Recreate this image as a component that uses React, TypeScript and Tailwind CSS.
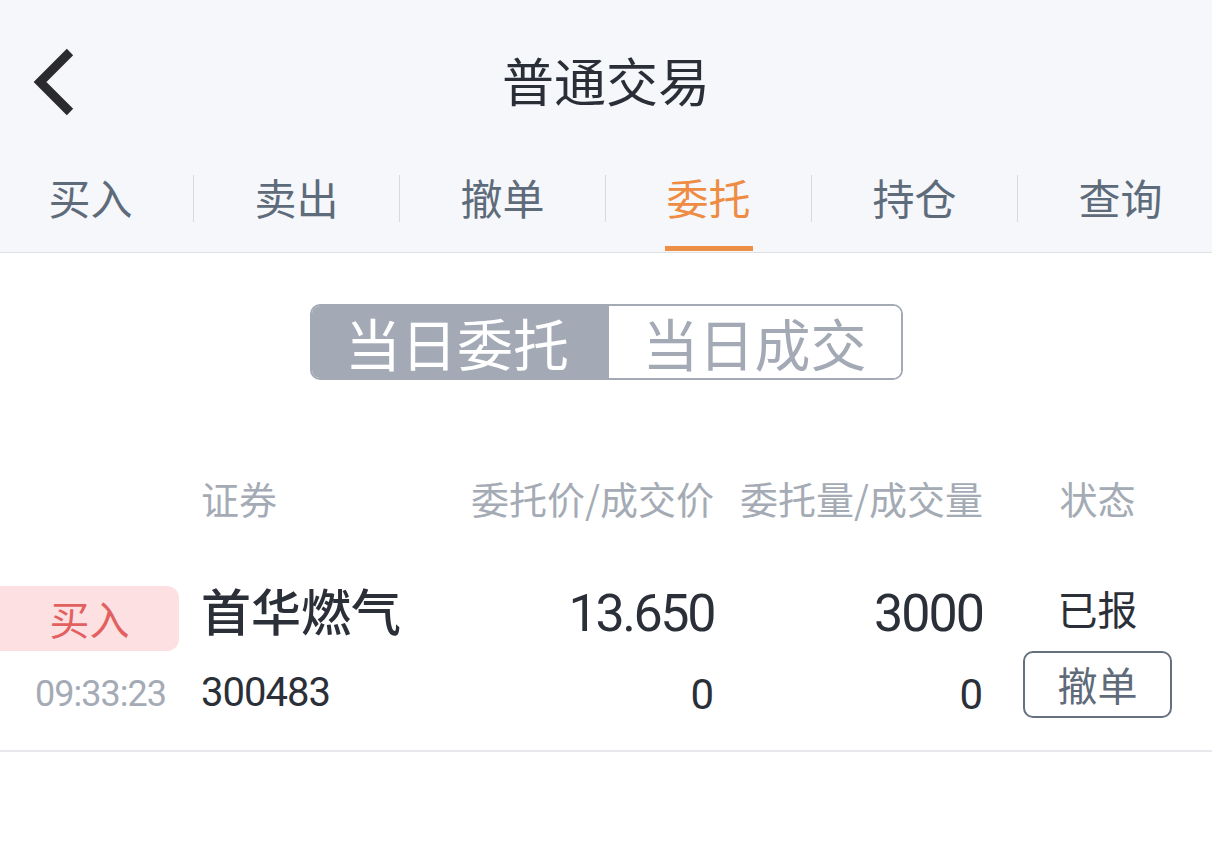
const cjk = { fontFamily: '"Noto Sans CJK SC", "Noto Sans", sans-serif' };
const num = { fontFamily: 'Roboto, "Noto Sans CJK SC", sans-serif' };

const tabs = ['买入', '卖出', '撤单', '委托', '持仓', '查询'];

function BackIcon() {
  return (
    <svg width="48" height="72" viewBox="0 0 48 72" className="block">
      <polyline points="37,6 7,36 37,66" fill="none" stroke="#2b2b2e" strokeWidth="9" strokeLinejoin="miter" />
    </svg>
  );
}

function TabBar() {
  return (
    <div className="flex h-[88px] ml-[-12px]">
      {tabs.map((t, i) => (
        <div key={t} className="flex">
          <div className="flex w-[205px] flex-col items-center">
            <div
              className={`mt-[12px] text-[42px] leading-[42px] ${t === '委托' ? 'text-[#ee8c44]' : 'text-[#5e6b7a]'}`}
            >
              {t}
            </div>
            <div className="flex-1" />
            <div className={`mb-px h-[5px] w-[88px] ${t === '委托' ? 'bg-[#ee8f47]' : ''}`} />
          </div>
          {i < tabs.length - 1 && <div className="mt-[11px] h-[47px] w-px bg-[#d6dae0]" />}
        </div>
      ))}
    </div>
  );
}

export default function App() {
  return (
    <div className="min-h-[861px] w-[1212px] overflow-hidden bg-white" style={cjk}>
      <div className="border-b border-[#dde0e5] bg-[#f5f7fb]">
        <div className="relative flex h-[164px] items-center justify-center pb-[4px]">
          <div className="absolute left-[33px] top-[46px]">
            <BackIcon />
          </div>
          <div className="text-[52px] leading-none text-[#2a2e37]">普通交易</div>
        </div>
        <TabBar />
      </div>

      <div className="mt-[51px] flex justify-center">
        <div className="flex h-[76px] w-[593px] rounded-[10px] border-2 border-[#a3aab5]">
          <div className="flex w-[297px] items-center justify-center rounded-l-[8px] bg-[#a3aab5] pr-[6px] text-[56px] leading-[60px] text-white">
            当日委托
          </div>
          <div className="flex flex-1 items-center justify-center rounded-r-[8px] bg-white text-[56px] leading-[60px] text-[#a3aab5]">
            当日成交
          </div>
        </div>
      </div>

      <div className="mt-[99px] flex text-[38px] leading-[38px] text-[#a4abb5]">
        <div className="w-[201px]" />
        <div className="w-[250px]">证券</div>
        <div className="w-[263px] text-right">委托价/成交价</div>
        <div className="w-[269px] text-right">委托量/成交量</div>
        <div className="flex-1 text-center">状态</div>
      </div>

      <div className="mt-[69px] flex h-[166px] border-b-2 border-[#e6e8eb]">
        <div className="flex w-[201px] flex-col">
          <div className="flex h-[65px] w-[179px] items-center justify-center rounded-r-[12px] bg-[#fde1e2] pb-[2px] text-[40px] leading-none text-[#e2605f]">
            买入
          </div>
          <div className="mt-[25px] text-center text-[36px] leading-[36px] tracking-[-1px] text-[#a4abb5]" style={num}>
            09:33:23
          </div>
        </div>

        <div className="flex w-[250px] flex-col">
          <div className="flex h-[65px] items-center pb-[20px] text-[50px] font-medium leading-none text-[#2b2f38]">
            首华燃气
          </div>
          <div className="mt-[22px] text-[40px] leading-[40px] tracking-[-1px] text-[#2b2f38]" style={num}>
            300483
          </div>
        </div>

        <div className="flex w-[263px] flex-col items-end text-[#2b2f38]" style={num}>
          <div className="flex h-[65px] items-center pb-[10px] text-[52px] leading-none tracking-[-2.4px]">13.650</div>
          <div className="mt-[23px] text-[42px] leading-[42px]">0</div>
        </div>

        <div className="flex w-[269px] flex-col items-end text-[#2b2f38]" style={num}>
          <div className="flex h-[65px] items-center pb-[10px] text-[52px] leading-none tracking-[-2px]">3000</div>
          <div className="mt-[23px] text-[42px] leading-[42px]">0</div>
        </div>

        <div className="flex flex-1 flex-col items-center">
          <div className="flex h-[65px] items-center pb-[22px] text-[40px] leading-none text-[#2b2f38]">已报</div>
          <div className="flex h-[67px] w-[149px] items-center justify-center rounded-[10px] border-2 border-[#66717f] pb-[2px] text-[40px] leading-none text-[#5f6b78]">
            撤单
          </div>
        </div>
      </div>
    </div>
  );
}
